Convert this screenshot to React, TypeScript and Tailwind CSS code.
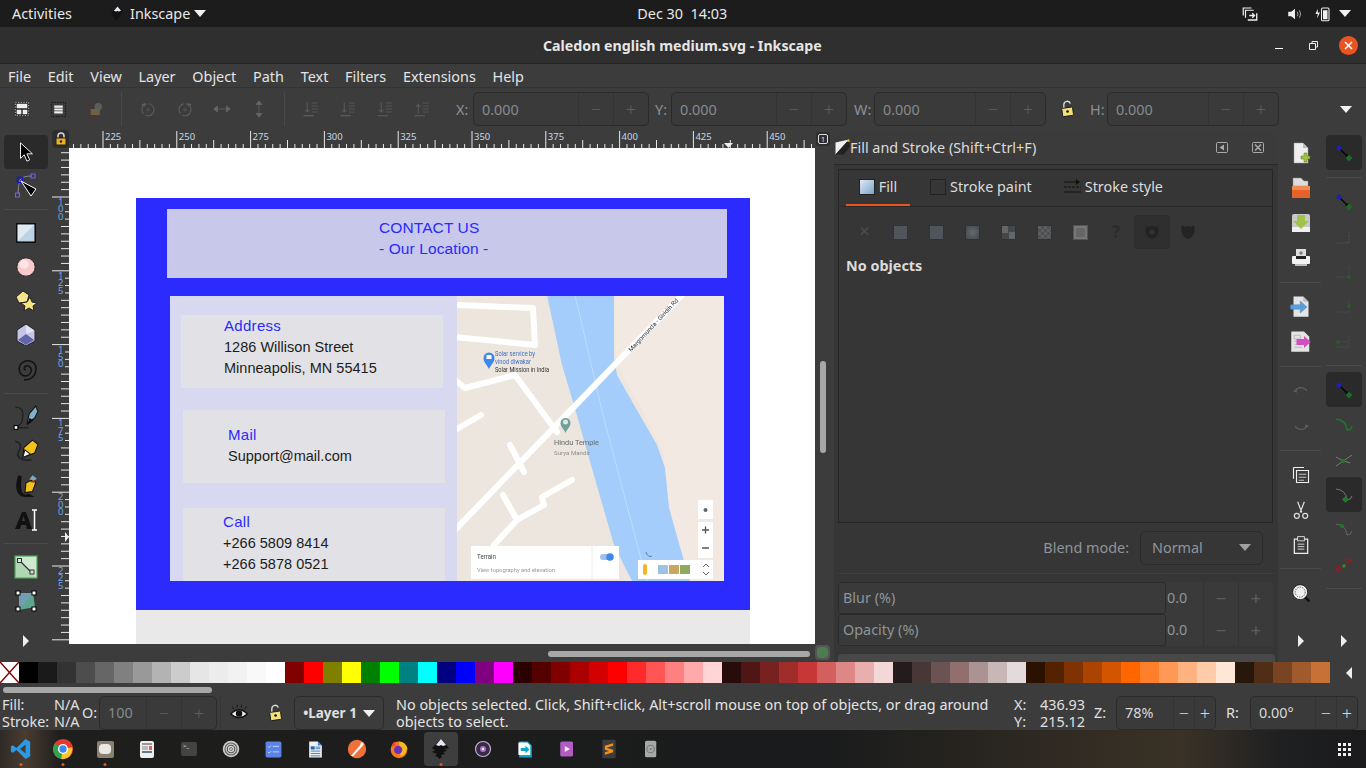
import React from 'react';

const ui = "font-['Noto_Sans',sans-serif]";

const swatches = [
  '#000000','#1a1a1a','#333333','#4d4d4d','#666666','#808080','#999999','#b3b3b3','#cccccc','#e6e6e6','#ececec','#f2f2f2','#f9f9f9','#ffffff',
  '#800000','#ff0000','#808000','#ffff00','#008000','#00ff00','#008080','#00ffff','#000080','#0000ff','#800080','#ff00ff',
  '#2b0000','#550000','#800000','#aa0000','#d40000','#ff0000','#ff2a2a','#ff5555','#ff8080','#ffaaaa','#ffd5d5',
  '#280b0b','#501616','#782121','#a02c2c','#c83737','#d35f5f','#de8787','#e9afaf','#f4d7d7',
  '#241c1c','#483737','#6c5353','#916f6f','#ac9393','#c8b7b7','#e3dbdb',
  '#2b1100','#552200','#803300','#aa4400','#d45500','#ff6600','#ff7f2a','#ff9955','#ffb380','#ffccaa','#ffe6d5',
  '#28170b','#502d16','#784421','#a05a2c','#c87137',
];

const menus = ['File', 'Edit', 'View', 'Layer', 'Object', 'Path', 'Text', 'Filters', 'Extensions', 'Help'];

const Ico: React.FC<{ s?: number; vb?: number; children: React.ReactNode }> = ({ s = 24, vb = 24, children }) => (
  <svg width={s} height={s} viewBox={`0 0 ${vb} ${vb}`} fill="none">{children}</svg>
);

const Tool: React.FC<{ active?: boolean; tall?: boolean; children: React.ReactNode }> = ({ active, tall, children }) => (
  <div className={`flex ${tall ? 'h-[35px]' : 'h-[34px]'} items-center justify-center rounded ${active ? 'bg-[#2a2a2a]' : ''}`}>{children}</div>
);

const Sep: React.FC<{ h?: string }> = ({ h = 'h-[13px]' }) => (
  <div className={`flex ${h} items-center`}><div className="h-px w-full bg-[#4a4a4a]" /></div>
);

const Spin: React.FC<{ value: string; w: string; btn?: string; bright?: boolean; low?: boolean }> = ({ value, w, btn = 'w-[35px]', bright, low }) => (
  <div className={`flex h-[34px] ${w} items-stretch rounded-[5px] border border-[#2b2b2b] bg-[#3a3a3a] text-[14.4px]`}>
    <div className={`flex flex-1 items-center pl-2 ${low ? 'pt-[2px]' : ''} ${bright ? 'text-[#d8d8d8]' : 'text-[#858b90]'}`}>{value}</div>
    <div className={`flex ${btn} items-center justify-center border-l border-[#333] text-[18px] font-light ${bright ? 'text-[#d8d8d8]' : 'text-[#5e5e5e]'}`}>−</div>
    <div className={`flex ${btn} items-center justify-center border-l border-[#333] text-[18px] font-light ${bright ? 'text-[#d8d8d8]' : 'text-[#5e5e5e]'}`}>+</div>
  </div>
);

const Arrow = () => (
  <svg width="8" height="12" viewBox="0 0 8 12"><path d="M1 0l6 6-6 6z" fill="#eee" /></svg>
);

const Down = ({ c = '#f2f2f2' }: { c?: string }) => (
  <svg width="12" height="7" viewBox="0 0 12 7"><path d="M0 0h12L6 7z" fill={c} /></svg>
);

const LockOpen = () => (
  <Ico s={20}>
    <path d="M7 11V6.500a4 4 0 0 1 7.800-1" stroke="#ddd" strokeWidth="1.600" />
    <rect x="5" y="10.500" width="13" height="10" rx="1" transform="rotate(-8 11 15)" fill="#f2e07a" stroke="#111" />
    <circle cx="11.500" cy="15" r="1.600" fill="#111" />
  </Ico>
);

const Inkscape = ({ s = 18 }: { s?: number }) => (
  <Ico s={s}>
    <path d="M12 2l8 9-3 1-2-1 3 3-4 1 2 2-4 1 1 2-3 2-1-2-3-1 2-2-5-2 3-2-3-2z" fill="#111" />
    <path d="M12 2l5 6-3 1-2-1-2 1-3-1z" fill="#e8e8f4" />
  </Ico>
);

const TopBar = () => (
  <div className={`flex h-[27px] items-center bg-[#1c1c1c] text-[14.4px] text-[#e8e8e8] ${ui}`}>
    <div className="ml-3 w-[97px]">Activities</div>
    <Inkscape s={17} />
    <div className="ml-[4px]">Inkscape</div>
    <div className="ml-[4px]"><Down /></div>
    <div className="ml-[431px] w-[90px] text-center whitespace-pre">Dec 30  14:03</div>
    <div className="ml-auto flex items-center">
      <Ico s={18}>
        <path d="M3 14V4h11M6 17V7h11" stroke="#eee" strokeWidth="1.600" />
        <path d="M9 20h12v-9M11 14h7m-3-3l3 3-3 3" stroke="#eee" strokeWidth="1.800" />
      </Ico>
      <div className="ml-[27px]">
        <Ico s={18}><path d="M3 9h4l5-4v14l-5-4H3z" fill="#eee" /><path d="M15 9q2 3 0 6M18 7q3 5 0 10" stroke="#ccc" /></Ico>
      </div>
      <div className="ml-[10px]">
        <Ico s={18}><path d="M5 5L2 12h3l-1 6 4-8H5z" fill="#eee" /><rect x="10" y="4" width="10" height="17" rx="1.500" stroke="#eee" strokeWidth="1.400" /><rect x="12" y="7" width="6" height="12" fill="#eee" /></Ico>
      </div>
      <div className="mr-[15px] ml-[7px]"><Down /></div>
    </div>
  </div>
);

const TitleBar = () => (
  <div className={`flex h-[37px] items-center border-b border-[#262626] bg-[#2f2f2f] ${ui}`}>
    <div className="ml-[543px] pt-[2px] text-[14.2px] font-bold text-[#e6e6e6]">Caledon english medium.svg - Inkscape</div>
    <div className="ml-auto flex items-center">
      <div className="mt-[6px] h-px w-2 bg-white" />
      <svg className="ml-[26px]" width="9" height="9" viewBox="0 0 9 9"><path d="M.5 2.500h6v6h-6zM3 2V.5h5.500V6H7" stroke="#eee" fill="none" /></svg>
      <div className="mr-[8px] ml-[21px] flex h-[19px] w-[19px] items-center justify-center rounded-full bg-[#e95420]">
        <svg width="9" height="9" viewBox="0 0 9 9"><path d="M1 1l7 7M8 1L1 8" stroke="#fff" strokeWidth="1.500" /></svg>
      </div>
    </div>
  </div>
);

const MenuBar = () => (
  <div className={`flex h-[24px] items-center gap-[16.75px] border-b border-[#333] bg-[#3c3c3c] pt-[2px] pl-2 text-[14.4px] text-[#e4e4e4] ${ui}`}>
    {menus.map(m => <span key={m}>{m}</span>)}
  </div>
);

const BarIco: React.FC<{ w?: string; children: React.ReactNode }> = ({ w = 'w-[37px]', children }) => (
  <div className={`flex ${w} items-center justify-center`}>{children}</div>
);

const VLine = () => <div className="mx-[7px] h-[34px] w-px bg-[#4a4a4a]" />;

const AlignIco = ({ up, mid }: { up?: boolean; mid?: boolean }) => (
  <Ico s={18}>
    <path d="M2 21h14" stroke={mid ? '#6b6247' : '#5a5a5a'} strokeWidth="1.500" />
    <path d="M13 4h8M13 8h8M13 12h8M13 16h8" stroke="#555" strokeWidth="1.500" />
    <path d={up ? 'M7 18V6m-3 3l3-3 3 3' : 'M7 3v13m-3-3l3 3 3-3'} stroke="#5a5a5a" strokeWidth="1.400" />
  </Ico>
);

const Toolbar = () => (
  <div className={`flex h-[42px] items-center bg-[#3c3c3c] pl-[3px] text-[14.4px] text-[#8b9196] ${ui}`}>
    <BarIco>
      <Ico s={16}><rect x="1" y="1" width="22" height="22" fill="#222" /><rect x="2" y="2" width="20" height="20" stroke="#fff" strokeDasharray="2 2" /><path d="M4 4h16v7H4zM4 13h7v7H4zM13 13h7v7h-7z" fill="#eee" /></Ico>
    </BarIco>
    <BarIco>
      <Ico s={17}><rect x="2" y="2" width="20" height="20" stroke="#000" strokeDasharray="2 2" /><path d="M6 8h12M6 12h12M6 16h12" stroke="#eee" strokeWidth="3" /></Ico>
    </BarIco>
    <BarIco>
      <Ico s={18}><rect x="2" y="2" width="20" height="20" stroke="#5c2f2f" strokeDasharray="2 1" /><circle cx="15" cy="9" r="5" fill="#5c5c5c" /><rect x="5" y="12" width="12" height="8" fill="#6b6247" /></Ico>
    </BarIco>
    <VLine />
    <BarIco>
      <Ico s={18}><circle cx="12" cy="13" r="8" stroke="#5c5c5c" strokeWidth="1.500" strokeDasharray="16 3" /><circle cx="12" cy="13" r="1.500" stroke="#5c5c5c" /><path d="M3 6l5-2v5z" fill="#5c5c5c" /></Ico>
    </BarIco>
    <BarIco>
      <Ico s={18}><circle cx="12" cy="13" r="8" stroke="#5c5c5c" strokeWidth="1.500" strokeDasharray="16 3" /><circle cx="12" cy="13" r="1.500" stroke="#5c5c5c" /><path d="M21 6l-5-2v5z" fill="#5c5c5c" /></Ico>
    </BarIco>
    <BarIco>
      <Ico s={18}><path d="M1 12h22M6 8l-5 4 5 4zM18 8l5 4-5 4z" stroke="#666" fill="#666" /></Ico>
    </BarIco>
    <BarIco>
      <Ico s={18}><path d="M12 1v22M8 6l4-5 4 5zM8 18l4 5 4-5z" stroke="#666" fill="#666" /></Ico>
    </BarIco>
    <VLine />
    <BarIco><AlignIco mid /></BarIco>
    <BarIco><AlignIco mid /></BarIco>
    <BarIco><AlignIco /></BarIco>
    <BarIco><AlignIco up /></BarIco>
    <div className="ml-[16px] w-[17px] pt-[2px]">X:</div>
    <Spin value="0.000" w="w-[176px]" low />
    <div className="ml-[6px] w-[16px] pt-[2px]">Y:</div>
    <Spin value="0.000" w="w-[176px]" low />
    <div className="ml-[7px] w-[20px] pt-[2px]">W:</div>
    <Spin value="0.000" w="w-[172px]" low />
    <div className="ml-[12px] w-[20px]"><LockOpen /></div>
    <div className="ml-[12px] w-[17px] pt-[2px]">H:</div>
    <Spin value="0.000" w="w-[172px]" low />
    <div className="ml-[61px]"><Down /></div>
  </div>
);

const Toolbox = () => (
  <div className="flex h-full w-[52px] flex-col px-[4px] pt-[5px]">
    <Tool active>
      <Ico s={22}><path d="M6 2v17l4-4 3 7 3-1.500-3-6.500h6z" fill="#000" stroke="#fff" /></Ico>
    </Tool>
    <Tool>
      <svg width="26" height="26" viewBox="0 0 26 26" fill="none">
        <path d="M7 7q2-4 12-4M7 7q-2 6-2 14" stroke="#888" />
        <rect x="4.500" y="4.500" width="5" height="5" stroke="#1414e0" strokeWidth="1.500" />
        <rect x="18" y="1" width="4" height="4" stroke="#6666f0" />
        <rect x="2.500" y="20" width="4" height="4" stroke="#6666f0" />
        <path d="M8 8l15 8-5 7z" fill="#000" stroke="#fff" />
      </svg>
    </Tool>
    <Sep />
    <Tool>
      <Ico s={22}><rect x="2" y="2" width="20" height="20" fill="#bcd3e6" stroke="#000" strokeWidth="1.500" /><path d="M3 3h18L3 21z" fill="#e0e8f0" /></Ico>
    </Tool>
    <Tool>
      <Ico s={22}><circle cx="12" cy="12" r="10" fill="#f9c8cc" stroke="#222" /><circle cx="10" cy="9" r="5" fill="#fde4e6" /></Ico>
    </Tool>
    <Tool>
      <Ico s={24}><path d="M2 8l7-6 6 4-2 7-8 1z" fill="#f5e58c" stroke="#222" /><path d="M16 8l2 5 5 1-4 3 1 5-5-3-5 3 1-5-4-3 6-1z" fill="#f6e47c" stroke="#222" /></Ico>
    </Tool>
    <Tool>
      <Ico s={24}><path d="M12 1l9 6v11l-9 5-9-5V7z" fill="#c5c5e6" stroke="#222" /><path d="M4 17l8-6 8 6-8 5z" fill="#6464a8" /><path d="M12 2l8 6-8 3z" fill="#e2e2f6" /></Ico>
    </Tool>
    <Tool>
      <Ico s={24}><path d="M12 13c-3 0-2-5 2-4 5 1 4 9-2 10-7 0-9-9-4-13 6-5 15-1 14 7-1 7-6 10-12 10" stroke="#111" strokeWidth="1.500" /></Ico>
    </Tool>
    <Sep h="h-[15px]" />
    <Tool>
      <Ico s={26}><path d="M2 2q10 0 6 14l-4 5h10" stroke="#222" strokeWidth="1.300" /><path d="M13 17l2-9 6-7 2 5-3 6z" fill="#7fb0cc" stroke="#111" /><path d="M13 19l2-7 4 2z" fill="#111" /><rect x="1" y="19" width="3.500" height="3.500" fill="#fff" stroke="#000" /></Ico>
    </Tool>
    <Tool>
      <Ico s={26}><path d="M2 2q8 2 3 10c-2 4 2 9 12 7" stroke="#222" strokeWidth="1.500" /><path d="M9 17l1-9 8-7 5 4-3 8z" fill="#f3c21b" stroke="#111" /><path d="M9 17l2-7 5 4z" fill="#fff" stroke="#111" /></Ico>
    </Tool>
    <Tool>
      <Ico s={26}><path d="M5 2c-3 8-3 15 2 19 4 2 10 1 13 1-4-2-6-4-8-2-5 0-5-8-4-17z" fill="#111" /><path d="M11 18l1-9 7-3 2 3-3 8z" fill="#f3c21b" stroke="#111" /><path d="M15 6l3-4 4 3-2 2z" fill="#7fa8c2" /><path d="M14 8l6-1 0 2z" fill="#b02a2a" /></Ico>
    </Tool>
    <Tool>
      <Ico s={24}><path d="M1 21L8 4h4l6 17h-5l-1-4H7l-1 4zM8 13h3L9.500 8z" fill="#111" /><path d="M18 2h5M20.500 2v20M18 22h5" stroke="#fff" strokeWidth="1.500" /></Ico>
    </Tool>
    <Sep />
    <Tool>
      <Ico s={24}><rect x="1" y="1" width="22" height="22" fill="#cfe8d0" stroke="#4ea35a" strokeWidth="1.200" /><path d="M23 23H1V1z" fill="#66b06e" opacity=".3" /><path d="M6 6l12 12" stroke="#333" strokeWidth="1.300" /><rect x="3.500" y="3.500" width="4" height="4" fill="#ddd" stroke="#333" /><rect x="16" y="15" width="4" height="4" fill="#ddd" stroke="#333" /></Ico>
    </Tool>
    <Tool>
      <Ico s={24}><path d="M5 4h14l2 14-16 3z" fill="#5fa690" /><path d="M5 4h14L5 21z" fill="#6f9fb0" /><g fill="#fff" stroke="#000"><rect x="2" y="2" width="4" height="4" /><rect x="18" y="2" width="4" height="4" /><rect x="2" y="18" width="4" height="4" /><rect x="18" y="18" width="4" height="4" /></g></Ico>
    </Tool>
    <div className="mt-auto mb-[15px] flex justify-center"><Arrow /></div>
  </div>
);

const TopRuler = () => {
  const ticks = Array.from({ length: 104 }, (_, i) => 103 - 52 - 7 * 7.38 + i * 7.38);
  return (
    <svg width="747" height="18" viewBox="17 0 747 18" className="block">
      {ticks.map((x, i) => {
        const major = (i + 3) % 10 === 0;
        const mid = (i + 3) % 5 === 0;
        return <line key={i} x1={x} x2={x} y1={major ? 1 : mid ? 10 : 14} y2={18} stroke="#e8e8e8" />;
      })}
      {[225, 250, 275, 300, 325, 350, 375, 400, 425, 450].map((n, i) => (
        <text key={n} x={53 + i * 73.8} y={10} fontSize="9.500" fill="#c6d6ea" fontFamily="Noto Sans, sans-serif">{n}</text>
      ))}
      <path d="M672 13h9l-4.500 5z" fill="#eee" />
    </svg>
  );
};

const LeftRuler = () => {
  const ticks = Array.from({ length: 68 }, (_, i) => 49 - 6 * 7.38 + i * 7.38);
  return (
    <svg width="17" height="496" className="block shrink-0">
      {ticks.map((y, i) => {
        const k = (i + 4) % 10;
        const major = k === 0;
        const short = k >= 1 && k <= 3;
        return <line key={i} x1={major ? 0 : short ? 13 : 9} x2={17} y1={y} y2={y} stroke="#e8e8e8" />;
      })}
      {['100', '125', '150', '175', '200', '225'].map((n, i) => {
        const y0 = 57 + i * 73.8;
        return (
          <text key={n} x="6 6 6" y={`${y0} ${y0 + 7.4} ${y0 + 14.8}`} fontSize="9.500" fill="#6ea6ec" fontFamily="Noto Sans, sans-serif">{n}</text>
        );
      })}
      <path d="M13 384l4 5-4 5z" fill="#eee" />
    </svg>
  );
};

const MapView = () => (
  <svg width="267" height="285" viewBox="0 1 267 285" className="block blur-[0.3px]" fontFamily="Roboto, sans-serif">
    <rect width="270" height="290" fill="#ece6de" />
    <path d="M157 0h110v290H230l-20-90-3-40-24-50-24-40z" fill="#f2e9e3" />
    <path d="M90 0h67v63l3 17 17 30 23 40 8 23 4 40 15 53 7 24h-57l-20-40-23-80-17-60-12-40z" fill="#a5cdfb" />
    <path d="M118 0l28 120 45 170" stroke="#bcdcfc" fill="none" />
    <g stroke="#fff" fill="none" strokeWidth="6" strokeLinecap="round" strokeLinejoin="round">
      <path d="M-2 10l78 3 2 37-80-8M-2 85l10 8 50-13 42 57M-2 135l26-15M53 150l14 27M46 200l14 25M37 250l23-25 27-15-2-8 30-17" />
      <path d="M-2 235L228-3" />
    </g>
    <text transform="translate(174 57) rotate(-47)" fontSize="6" fill="#333" textLength="70" lengthAdjust="spacingAndGlyphs">Margomunda - Giridih Rd</text>
    <path d="M26.500 63a5.500 5.500 0 0 1 11 0c0 4-3 6-5.500 11-2.500-5-5.500-7-5.500-11z" fill="#3f87e8" />
    <rect x="29.500" y="60" width="5" height="4" fill="#fff" />
    <g fontSize="6.500">
      <text x="38" y="61" fill="#3f6fc8" textLength="40" lengthAdjust="spacingAndGlyphs">Solar service by</text>
      <text x="38" y="69" fill="#3f6fc8" textLength="36" lengthAdjust="spacingAndGlyphs">vinod diwakar</text>
      <text x="38" y="77" fill="#333" textLength="54" lengthAdjust="spacingAndGlyphs">Solar Mission in India</text>
    </g>
    <path d="M103.500 128a5 5 0 0 1 10 0c0 4-3 5-5 10-2-5-5-6-5-10z" fill="#6fa09a" />
    <circle cx="108.500" cy="127" r="2.500" fill="#d8e8e4" />
    <text x="97" y="150" fontSize="8" fill="#5f6a6a" textLength="45" lengthAdjust="spacingAndGlyphs">Hindu Temple</text>
    <text x="97" y="160" fontSize="6" fill="#8a8f8f" textLength="36" lengthAdjust="spacingAndGlyphs">Surya Mandir</text>
    <rect x="14" y="251" width="148" height="33" fill="#fff" />
    <line x1="135" x2="135" y1="251" y2="284" stroke="#eee" />
    <text x="20" y="264" fontSize="6.500" fill="#444" textLength="19" lengthAdjust="spacingAndGlyphs">Terrain</text>
    <text x="20" y="277" fontSize="6" fill="#999" textLength="78" lengthAdjust="spacingAndGlyphs">View topography and elevation</text>
    <rect x="143" y="259" width="13" height="6" rx="3" fill="#9dc0f0" />
    <circle cx="153" cy="262" r="3.800" fill="#3f87e8" />
    <rect x="241" y="205" width="15" height="19" fill="#fff" />
    <circle cx="248.500" cy="215" r="2" fill="#666" />
    <rect x="241" y="227" width="15" height="36" fill="#fff" />
    <path d="M245 235h7M248.500 231.500v7M245 253h7" stroke="#555" strokeWidth="1.300" />
    <rect x="181" y="265" width="75" height="19" fill="#fff" />
    <rect x="186" y="269" width="4" height="11" rx="2" fill="#f5b52a" />
    <rect x="201" y="270" width="10" height="9" fill="#9cc4e0" />
    <rect x="212" y="270" width="10" height="9" fill="#c8a860" />
    <rect x="223" y="270" width="10" height="9" fill="#8eaa60" />
    <path d="M246 272l3-3 3 3M246 277l3 3 3-3" stroke="#666" fill="none" />
    <path d="M189 257q2 6 6 4" stroke="#5e7f9f" fill="none" />
  </svg>
);

const Card: React.FC<{ cls: string; title: string; lines: string[] }> = ({ cls, title, lines }) => (
  <div className={`w-[262px] bg-[#e2e2e6] ${cls}`}>
    <div className="mb-[1px] text-[15px] tracking-[0.3px] text-[#2a2aff]">{title}</div>
    {lines.map(l => <div key={l} className="text-[14.5px] tracking-[0.02px] text-[#1c1c1c]">{l}</div>)}
  </div>
);

const Drawing = () => (
  <div className="h-[496px] w-[746px] overflow-hidden bg-white pt-[50px] pl-[67px] font-['Liberation_Sans',sans-serif]">
    <div className="w-[614px] bg-[#2b2bff] px-[31px] pt-[11px] pb-[29px]">
      <div className="h-[69px] w-[560px] bg-[#c8c8ea] pt-[8px] pl-[212px] text-[15.500px] leading-[21px] tracking-[0.1px] text-[#2a2aff]">
        <div>CONTACT US</div>
        <div>- Our Location -</div>
      </div>
      <div className="mt-[18px] ml-[3px] flex h-[285px] w-[554px] bg-[#d8d8f0] leading-[21px]">
        <div className="flex w-[287px] flex-col pl-[11px]">
          <Card cls="mt-[19px] h-[73px] pl-[43px]" title="Address" lines={['1286 Willison Street', 'Minneapolis, MN 55415']} />
          <Card cls="mt-[22px] ml-[2px] h-[73px] pl-[45px] pt-[14px]" title="Mail" lines={['Support@mail.com']} />
          <Card cls="mt-[25px] ml-[2px] h-[73px] pl-[40px] pt-[3px]" title="Call" lines={['+266 5809 8414', '+266 5878 0521']} />
        </div>
        <MapView />
      </div>
    </div>
    <div className="h-[40px] w-[614px] bg-[#e9e9e9]" />
  </div>
);

const CanvasArea = () => (
  <div className="flex h-full w-[782px] flex-col">
    <div className="flex h-[18px]">
      <div className="flex h-[18px] w-[17px] items-center justify-center rounded bg-[#2e2e2e]">
        <svg width="12" height="14" viewBox="0 0 12 14"><path d="M3 6V4a3 3 0 0 1 6 0v2" stroke="#d8d8d8" fill="none" strokeWidth="1.500" /><rect x="1" y="6" width="10" height="7" fill="#f0b020" stroke="#222" /><circle cx="6" cy="9.500" r="1.200" fill="#222" /></svg>
      </div>
      <TopRuler />
      <div className="flex h-[18px] w-[18px] items-center">
        <div className="flex h-[14px] w-[14px] items-center justify-center rounded-[3px] bg-[#2e2e2e]">
          <div className="flex h-[10px] w-[10px] items-center justify-center rounded-[2px] border border-[#ddd] text-[7px] leading-none text-[#eee]">1</div>
        </div>
      </div>
    </div>
    <div className="flex h-[496px]">
      <LeftRuler />
      <Drawing />
      <div className="w-[19px] pt-[213px] pl-[5px]">
        <div className="h-[92px] w-[6px] rounded-full bg-[#a8a8a8]" />
      </div>
    </div>
    <div className="flex h-[18px]">
      <div className="mt-[7px] ml-[496px] h-[6px] w-[262px] rounded-full bg-[#a8a8a8]" />
      <div className="mt-[1px] ml-[5px] h-[15px] w-[15px] rounded-sm bg-[#555] p-[2px]">
        <div className="h-full w-full rounded-sm bg-[#4c7c50]" />
      </div>
    </div>
  </div>
);

const PaintBtn: React.FC<{ active?: boolean; children: React.ReactNode }> = ({ active, children }) => (
  <div className={`flex h-[34px] w-[36px] items-center justify-center rounded ${active ? 'border border-[#2e2e2e] bg-[#2f2f2f]' : ''}`}>{children}</div>
);

const sq = 'h-[15px] w-[15px] border border-[#2e3338]';

const Panel = () => (
  <div className={`flex h-full w-[444px] flex-col bg-[#363636] text-[14.4px] ${ui}`}>
    <div className="relative flex h-[35px] items-center border-b border-[#2a2a2a] bg-[#3b3b3b] pt-[2px] pl-[16px] text-[#dcdcdc]">
      <div className="absolute top-[8px] left-0">
        <Ico s={18}><path d="M2 22V6L20 2z" fill="#f0f0f0" /><path d="M2 22L20 2l1 10-8 10z" fill="#222" /><path d="M17 5l3-4 1 4z" fill="#f3c21b" /></Ico>
      </div>
      <span>Fill and Stroke (Shift+Ctrl+F)</span>
      <svg className="mb-[2px] ml-auto" width="12" height="11" viewBox="0 0 12 11"><rect x=".5" y=".5" width="11" height="10" rx="1" stroke="#aaa" fill="none" /><path d="M8 2.500v6L3.500 5.500z" fill="#aaa" /></svg>
      <svg className="mr-[14px] mb-[2px] ml-[24px]" width="12" height="11" viewBox="0 0 12 11"><rect x=".5" y=".5" width="11" height="10" rx="1" stroke="#aaa" fill="none" /><path d="M3 2.500l6 6M9 2.500l-6 6" stroke="#aaa" strokeWidth="1.500" /></svg>
    </div>
    <div className="mx-[4px] mt-[4px] flex h-[354px] w-[435px] flex-col border border-[#262626]">
      <div className="flex h-[37px] items-stretch border-b border-[#2a2a2a] text-[#dcdcdc]">
        <div className="ml-[7px] flex w-[64px] items-center justify-center gap-[4px] border-b-2 border-[#e95420] pb-[1px]">
          <div className="h-[16px] w-[16px] border border-[#222] bg-[linear-gradient(135deg,#dfe9f3,#7ea4cc)]" />
          <span>Fill</span>
        </div>
        <div className="ml-[20px] flex items-center gap-[4px] pb-[2px]">
          <div className="h-[16px] w-[16px] border border-[#222]" />
          <span>Stroke paint</span>
        </div>
        <div className="ml-[32px] flex items-center gap-[4px] pb-[2px]">
          <svg width="17" height="16" viewBox="0 0 17 16"><path d="M0 3h13M0 13h17" stroke="#111" strokeWidth="1.200" /><path d="M0 8h17" stroke="#111" strokeWidth="1.200" strokeDasharray="3 1" /><path d="M12 0l4 3-4 3z" fill="#111" /></svg>
          <span>Stroke style</span>
        </div>
      </div>
      <div className="mt-[8px] flex items-center pl-[7px]">
        <PaintBtn><span className="text-[13px] font-bold text-[#4a4a4a]">✕</span></PaintBtn>
        <PaintBtn><div className={`${sq} bg-[#4f555b]`} /></PaintBtn>
        <PaintBtn><div className={`${sq} bg-[#4f555b]`} /></PaintBtn>
        <PaintBtn><div className={`${sq} bg-[radial-gradient(#656a70,#43484d)]`} /></PaintBtn>
        <PaintBtn><div className={`${sq} bg-[conic-gradient(#43484d_25%,#666_0_50%,#43484d_0_75%,#666_0)]`} /></PaintBtn>
        <PaintBtn><div className={`${sq} bg-[conic-gradient(#4c5156_25%,#5e5e5e_0_50%,#4c5156_0_75%,#5e5e5e_0)] bg-[length:6px_6px]`} /></PaintBtn>
        <PaintBtn><div className={`${sq} border-[#4f555b] bg-[#777] p-[2px]`}><div className="h-full w-full bg-[#666]" /></div></PaintBtn>
        <PaintBtn><span className="text-[17px] font-bold text-[#2c2c2c]">?</span></PaintBtn>
        <PaintBtn active>
          <Ico s={18}><path d="M4 3l4 2 4-1 4 1 4-2c2 8 0 17-8 18C4 20 2 11 4 3z" fill="#232323" /><circle cx="12" cy="12" r="3.500" fill="#333" /></Ico>
        </PaintBtn>
        <PaintBtn>
          <Ico s={18}><path d="M4 3l4 2 4-1 4 1 4-2c2 8 0 17-8 18C4 20 2 11 4 3z" fill="#232323" /></Ico>
        </PaintBtn>
      </div>
      <div className="mt-[6px] pl-[7px] font-bold text-[#dcdcdc]">No objects</div>
    </div>
    <div className="mt-[7px] flex h-[35px] items-center justify-end border-b border-transparent pt-[1px] pr-[15px] text-[#8f959b]">
      <span className="pt-[1px]">Blend mode:</span>
      <div className="ml-[11px] flex h-[34px] w-[123px] items-center justify-between rounded-[5px] border border-[#2b2b2b] px-[11px]">
        <span>Normal</span>
        <Down c="#a0a0a0" />
      </div>
    </div>
    <div className="mx-[4px] mt-[8px] h-px bg-[#3f3f3f]" />
    <div className="mt-[8px] ml-[4px] flex h-[64px] w-[435px] flex-col bg-[#3a3a3a] text-[#8f959b]">
      {['Blur (%)', 'Opacity (%)'].map(t => (
        <div key={t} className="flex h-[32px] items-stretch">
          <div className="flex w-[328px] items-center rounded-[3px] border border-[#2b2b2b] pl-[4px]">{t}</div>
          <div className="flex w-[37px] items-center pl-[1px]">0.0</div>
          <div className="flex w-[35px] items-center justify-center border-l border-[#333] text-[18px] text-[#5e5e5e]">−</div>
          <div className="flex w-[35px] items-center justify-center border-l border-[#333] text-[18px] text-[#5e5e5e]">+</div>
        </div>
      ))}
    </div>
    <div className="mt-auto ml-[4px] h-[8px] w-[437px] rounded-t bg-[#484848]" />
  </div>
);

const Commands = () => (
  <div className="flex h-full w-[47px] flex-col pt-[5px] pr-[4px] pl-[2px]">
    <Tool tall><Ico s={24}><path d="M5 2h9l5 5v15H5z" fill="#eee" stroke="#999" strokeWidth=".500" /><path d="M14 2v5h5z" fill="#bbb" /><path d="M15 12h3v3h3v3h-3v3h-3v-3h-3v-3h3z" fill="#a2c24a" stroke="#55701c" strokeWidth=".500" /></Ico></Tool>
    <Tool tall><Ico s={24}><path d="M4 2h8l3 3h4v5H4z" fill="#ddd" stroke="#888" strokeWidth=".500" /><path d="M3 10h18v12H3z" fill="#e5622a" /><path d="M3 10h18v4H3z" fill="#f08a50" /></Ico></Tool>
    <Tool tall><Ico s={24}><rect x="3" y="3" width="18" height="18" rx="2" fill="#c8c8c8" /><rect x="3" y="16" width="18" height="5" fill="#f0f0f0" /><path d="M8 4h8v6h4l-8 8-8-8h4z" fill="#a2c24a" /></Ico></Tool>
    <Tool tall><Ico s={24}><rect x="7" y="3" width="10" height="8" fill="#ddd" /><path d="M10 7h4M12 5v4" stroke="#666" /><rect x="3" y="10" width="18" height="8" rx="1" fill="#f2f2f2" /><rect x="7" y="10" width="10" height="3" fill="#222" /><rect x="6" y="18" width="12" height="2" fill="#bbb" /></Ico></Tool>
    <Sep h="h-[14px]" />
    <Tool tall><Ico s={24} vb={32}><path d="M6 2h13l7 7v20H6z" fill="#e4e4e4" /><path d="M19 2v7h7z" fill="#bbb" /><path d="M2 13h13V8l9 8-9 8v-5H2z" fill="#5b9ed8" stroke="#3a78b8" strokeWidth=".500" /></Ico></Tool>
    <Tool tall><Ico s={24} vb={32}><path d="M3 2h17l7 7v20H3z" fill="#e4e4e4" /><path d="M7 7h8v5H7zM7 15h10M7 19h10M7 23h10" stroke="#b8a8a8" /><path d="M10 12h10V8l9 8-9 8v-4H10z" fill="#d050c0" /></Ico></Tool>
    <Sep h="h-[14px]" />
    <Tool tall><Ico s={20}><path d="M5 12a8 8 0 0 1 14 0" stroke="#5e5e5e" strokeWidth="1.500" /><path d="M2 12l5-2v4z" fill="#5e5e5e" /></Ico></Tool>
    <Tool tall><Ico s={20}><path d="M5 12a8 8 0 0 0 14 0" stroke="#5e5e5e" strokeWidth="1.500" /><path d="M22 12l-5 2v-4z" fill="#5e5e5e" /></Ico></Tool>
    <Sep h="h-[14px]" />
    <Tool tall><Ico s={18}><path d="M2 2h14M2 2v15M6 6h16v16H6z" stroke="#eee" strokeWidth="1.500" /><path d="M9 11h10M9 15h10M9 19h7" stroke="#eee" /></Ico></Tool>
    <Tool tall><Ico s={20}><path d="M8 2l5 13M16 2l-5 13" stroke="#ddd" strokeWidth="1.500" /><circle cx="7" cy="19" r="3" stroke="#ddd" strokeWidth="1.500" /><circle cx="17" cy="19" r="3" stroke="#ddd" strokeWidth="1.500" /></Ico></Tool>
    <Tool tall><Ico s={20}><path d="M4 5h16v17H4z" stroke="#eee" strokeWidth="1.500" /><rect x="8" y="2" width="8" height="5" fill="#3c3c3c" stroke="#eee" /><path d="M8 11h8M8 14h8M8 17h8" stroke="#eee" /></Ico></Tool>
    <Sep h="h-[13px]" />
    <Tool tall><Ico s={20}><circle cx="11" cy="11" r="9" fill="#eee" stroke="#111" /><circle cx="11" cy="11" r="6" stroke="#333" strokeDasharray="1.500 1.500" /><path d="M17 17l5 5" stroke="#111" strokeWidth="3" /></Ico></Tool>
    <div className="mt-auto mb-[15px] flex justify-center"><Arrow /></div>
  </div>
);

const SnapNode = ({ o = 1 }: { o?: number }) => (
  <svg width="18" height="18" viewBox="0 0 18 18" opacity={o}>
    <path d="M4 4l9 9" stroke="#000" strokeWidth="1.300" />
    <path d="M10 13l4 1-1-4z" fill="#000" />
    <circle cx="4" cy="4" r="2.500" fill="#2020b0" />
    <rect x="11.500" y="11.500" width="5" height="5" transform="rotate(45 14 14)" fill="#1c6a24" />
  </svg>
);

const Snap = () => (
  <div className="flex h-full w-[41px] flex-col pt-[5px] pr-[4px] pl-[1px]">
    <Tool tall active><SnapNode /></Tool>
    <Sep h="h-[14px]" />
    <Tool tall><SnapNode /></Tool>
    <Tool tall><svg width="18" height="18" viewBox="0 0 18 18"><path d="M2 15h12V3" stroke="#455a45" strokeDasharray="2 1" fill="none" /></svg></Tool>
    <Tool tall><svg width="18" height="18" viewBox="0 0 18 18"><path d="M2 14h12V3" stroke="#4a4a4a" strokeDasharray="2 1" fill="none" /><circle cx="14" cy="14" r="2" fill="#2a5a2a" /></svg></Tool>
    <Tool tall><svg width="18" height="18" viewBox="0 0 18 18"><path d="M2 14h12V3" stroke="#4a4a4a" strokeDasharray="2 1" fill="none" /><circle cx="14" cy="8" r="2" fill="#2a5a2a" /></svg></Tool>
    <Tool tall><svg width="18" height="18" viewBox="0 0 18 18"><path d="M2 14h12V3M2 9h12" stroke="#4a4a4a" strokeDasharray="2 1" fill="none" /><circle cx="3" cy="9" r="2" fill="#2a5a2a" /></svg></Tool>
    <Sep />
    <Tool tall active><SnapNode /></Tool>
    <Tool tall><svg width="20" height="18" viewBox="0 0 20 18"><path d="M2 3q10 1 11 11M13 14q4 0 5-4" stroke="#1c7a24" strokeWidth="1.500" fill="none" /></svg></Tool>
    <Tool tall><svg width="20" height="18" viewBox="0 0 20 18"><path d="M2 15L18 4M2 6q6 4 14 6" stroke="#777" fill="none" /><circle cx="9" cy="10" r="2" fill="#1c7a24" /></svg></Tool>
    <Tool tall active><svg width="20" height="18" viewBox="0 0 20 18"><path d="M2 3q10 1 11 11M13 14q4 0 5-4" stroke="#777" fill="none" /><rect x="9" y="11" width="5" height="5" fill="#1c7a24" transform="rotate(45 11.500 13.500)" /></svg></Tool>
    <Tool tall><svg width="20" height="18" viewBox="0 0 20 18"><path d="M2 3q10 1 11 11M13 14q4 0 5-4" stroke="#666" fill="none" /><circle cx="8" cy="5" r="2" fill="#1c7a24" /></svg></Tool>
    <Tool tall><svg width="20" height="18" viewBox="0 0 20 18"><path d="M2 16L18 3M2 12l4 4M13 2l4 4M6 13l-2-4" stroke="#a01818" strokeWidth="1.500" fill="none" /><circle cx="10" cy="10" r="1.800" fill="#2a8a3a" /></svg></Tool>
    <Sep />
    <div className="mt-auto mb-[15px] flex justify-center"><Arrow /></div>
  </div>
);

const Palette = () => (
  <div className="flex h-[21px] bg-[#3c3c3c]">
    <svg width="19" height="21" viewBox="0 0 19 21" className="shrink-0"><rect width="19" height="21" fill="#fff" /><path d="M0 0l19 21M19 0L0 21" stroke="#800000" strokeWidth="1.500" /></svg>
    {swatches.map((c, i) => <div key={i} className="h-[21px] w-[19px] shrink-0" style={{ backgroundColor: c }} />)}
    <div className="ml-auto mr-[13px] flex items-center"><div className="rotate-180"><Arrow /></div></div>
  </div>
);

const StatusBar = () => (
  <div className={`flex h-[34px] items-center bg-[#3c3c3c] text-[14.4px] text-[#e0e0e0] ${ui}`}>
    <div className="ml-[2px] w-[52px] leading-[17px]"><div>Fill:</div><div>Stroke:</div></div>
    <div className="w-[28px] leading-[17px]"><div>N/A</div><div>N/A</div></div>
    <div className="w-[17px]">O:</div>
    <Spin value="100" w="w-[118px]" />
    <div className="ml-[3px] h-[34px] w-px bg-[#363636]" />
    <div className="ml-[8px] w-[34px]">
      <Ico s={22}><path d="M2 13q9-9 18 0-9 8-18 0z" fill="#eee" stroke="#111" strokeWidth="1.500" /><circle cx="11" cy="12.500" r="3.500" fill="#111" /><path d="M5 8L4 5M9 6V3M13 6l1-3M17 8l2-3" stroke="#111" /></Ico>
    </div>
    <div className="ml-[3px] w-[20px]"><LockOpen /></div>
    <div className="ml-[8px] flex h-[34px] w-[90px] items-center justify-center gap-[6px] rounded-[5px] border border-[#2b2b2b] text-[13.500px] font-bold">
      <span>•Layer 1</span>
      <Down />
    </div>
    <div className="ml-[12px] w-[604px] leading-[17px] text-[#e4e4e4]">No objects selected. Click, Shift+click, Alt+scroll mouse on top of objects, or drag around objects to select.</div>
    <div className="ml-[14px] w-[26px] leading-[17px]"><div>X:</div><div>Y:</div></div>
    <div className="w-[48px] leading-[17px]"><div>436.93</div><div>215.12</div></div>
    <div className="ml-[6px] w-[22px]">Z:</div>
    <Spin value="78%" w="w-[100px]" btn="w-[21px]" bright />
    <div className="ml-[10px] w-[24px]">R:</div>
    <Spin value="0.00°" w="w-[108px]" btn="w-[21px]" bright />
  </div>
);

const DockIcon: React.FC<{ active?: boolean; dot?: boolean; children: React.ReactNode }> = ({ active, dot, children }) => (
  <div className="relative flex h-[38px] w-[42px] shrink-0 items-center justify-center">
    {active && <div className="absolute top-[2px] left-[4px] h-[34px] w-[34px] rounded bg-white/15" />}
    <div className="relative">{children}</div>
    {dot && <div className="absolute bottom-[2px] left-1/2 h-[3px] w-[3px] -translate-x-1/2 rounded-full bg-[#e95420]" />}
  </div>
);

const Dock = () => (
  <div className="flex h-[38px] items-center bg-[linear-gradient(90deg,#2e2a26_0px,#4a3c30_25px,#1e1e1c_60px,#1c1d1c_500px,#191b1c_820px,#2a2620_1000px,#3a3226_1180px,#1f2022_1280px,#1a1a1c_1366px)]">
    <DockIcon dot><Ico s={22}><path d="M17 1l5 3v16l-5 3L7 13l-4 3-2-1V9l2-1 4 3zM17 7l-6 5 6 5z" fill="#2a9ae6" /></Ico></DockIcon>
    <DockIcon dot>
      <Ico s={22}><circle cx="12" cy="12" r="11" fill="#e5392f" /><path d="M12 12L3 6 1 12a11 11 0 0 0 9 11z" fill="#2ea44f" /><path d="M12 12l10-2a11 11 0 0 1-12 13z" fill="#f7c52b" /><circle cx="12" cy="12" r="5.500" fill="#fff" /><circle cx="12" cy="12" r="4" fill="#3f86ec" /></Ico>
    </DockIcon>
    <DockIcon dot><div className="flex h-[17px] w-[17px] items-center justify-center rounded-[2px] bg-[#8a8070]"><div className="h-[10px] w-[12px] rounded-sm bg-[#ebe8e2]" /></div></DockIcon>
    <DockIcon>
      <div className="flex h-[17px] w-[14px] flex-col gap-[1px] rounded-[2px] bg-[#eee] p-[2px]"><div className="h-[2px] bg-[#999]" /><div className="flex gap-[1px]"><div className="h-[4px] w-[6px] bg-[#bbb]" /><div className="h-[4px] w-[3px] bg-[#e26060]" /></div><div className="h-[2px] bg-[#678]" /></div>
    </DockIcon>
    <DockIcon>
      <div className="flex h-[14px] w-[16px] items-start rounded-[2px] bg-[#444] pl-[2px] text-[6px] leading-[8px] text-white">&gt;_</div>
    </DockIcon>
    <DockIcon><Ico s={18}><circle cx="12" cy="12" r="11" fill="#ccc" /><circle cx="12" cy="12" r="8" stroke="#666" strokeWidth="1.500" /><circle cx="12" cy="12" r="5" stroke="#555" strokeWidth="1.500" /><circle cx="12" cy="12" r="2" fill="#ccc" stroke="#666" /></Ico></DockIcon>
    <DockIcon>
      <Ico s={19}><rect x="2" y="2" width="20" height="20" rx="2" fill="#5b84e8" /><path d="M5 8l1.500 1.500L9 7M5 15l1.500 1.500L9 14M11 8h8M11 15h8" stroke="#dbe6ff" /></Ico>
    </DockIcon>
    <DockIcon>
      <Ico s={19}><path d="M4 2h11l5 5v15H4z" fill="#f0f0f0" /><path d="M15 2l5 5h-5z" fill="#3f86c8" /><rect x="6" y="8" width="5" height="4" fill="#1f68b0" /><path d="M12 9h6M12 11h6M6 14h12M6 17h12M6 20h12" stroke="#1f68b0" /></Ico>
    </DockIcon>
    <DockIcon>
      <Ico s={20}><circle cx="12" cy="12" r="11" fill="#f0703a" /><path d="M5 20L17 6l2 2L7 21z" fill="#fff" /><circle cx="18" cy="6" r="2" fill="#fff" /></Ico>
    </DockIcon>
    <DockIcon>
      <Ico s={20}><circle cx="12" cy="13" r="10" fill="#f37a1f" /><path d="M12 3q8 1 10 8-2 8-8 10z" fill="#f6b91c" /><circle cx="11" cy="13" r="5" fill="#6b2fbf" /><path d="M3 9q1-5 5-6-2 3 0 5z" fill="#f0442c" /></Ico>
    </DockIcon>
    <DockIcon active dot><Inkscape s={24} /></DockIcon>
    <DockIcon><Ico s={18}><circle cx="12" cy="12" r="10" fill="#3a2a48" stroke="#c8b4d8" strokeWidth="1.500" /><circle cx="12" cy="12" r="4" fill="#a678c8" /><circle cx="12" cy="12" r="1.500" fill="#fff" /></Ico></DockIcon>
    <DockIcon>
      <Ico s={19}><path d="M4 2h11l5 5v15H4z" fill="#0aa5c8" /><path d="M3 3h11l4 4v12H3z" fill="#fff" /><path d="M6 10h6V7l5 5-5 5v-3H6z" fill="#0aa5c8" /></Ico>
    </DockIcon>
    <DockIcon><Ico s={18}><rect x="3" y="2" width="17" height="20" rx="2" fill="#b05cc0" /><path d="M9 8l7 4-7 4z" fill="#f6e6f8" /></Ico></DockIcon>
    <DockIcon>
      <Ico s={20}><rect x="4" y="1" width="16" height="22" rx="1.500" fill="#3c3c3c" /><path d="M7 8l10-3v3L7 11zM7 10l10 3v3L7 13zM7 16l10-3v3L7 19z" fill="#f38f1e" /></Ico>
    </DockIcon>
    <DockIcon><Ico s={18}><rect x="4" y="1" width="15" height="22" rx="2" fill="#a8a8a8" /><circle cx="11.500" cy="12" r="5" stroke="#777" strokeWidth="1.500" /><circle cx="11.500" cy="12" r="1.500" fill="#777" /></Ico></DockIcon>
    <div className="mr-[15px] ml-auto grid grid-cols-3 gap-[2px]">
      {Array.from({ length: 9 }, (_, i) => <div key={i} className="h-[3px] w-[3px] bg-[#eee]" />)}
    </div>
  </div>
);

export default function App() {
  return (
    <div className="flex h-[768px] w-[1366px] flex-col overflow-hidden bg-[#3c3c3c]">
      <TopBar />
      <TitleBar />
      <MenuBar />
      <Toolbar />
      <div className="flex h-[532px]">
        <Toolbox />
        <CanvasArea />
        <Panel />
        <Commands />
        <Snap />
      </div>
      <Palette />
      <div className="flex h-[13px] items-center pl-[3px]">
        <div className="h-[6px] w-[209px] rounded-full bg-[#a8a8a8]" />
      </div>
      <StatusBar />
      <Dock />
    </div>
  );
}
